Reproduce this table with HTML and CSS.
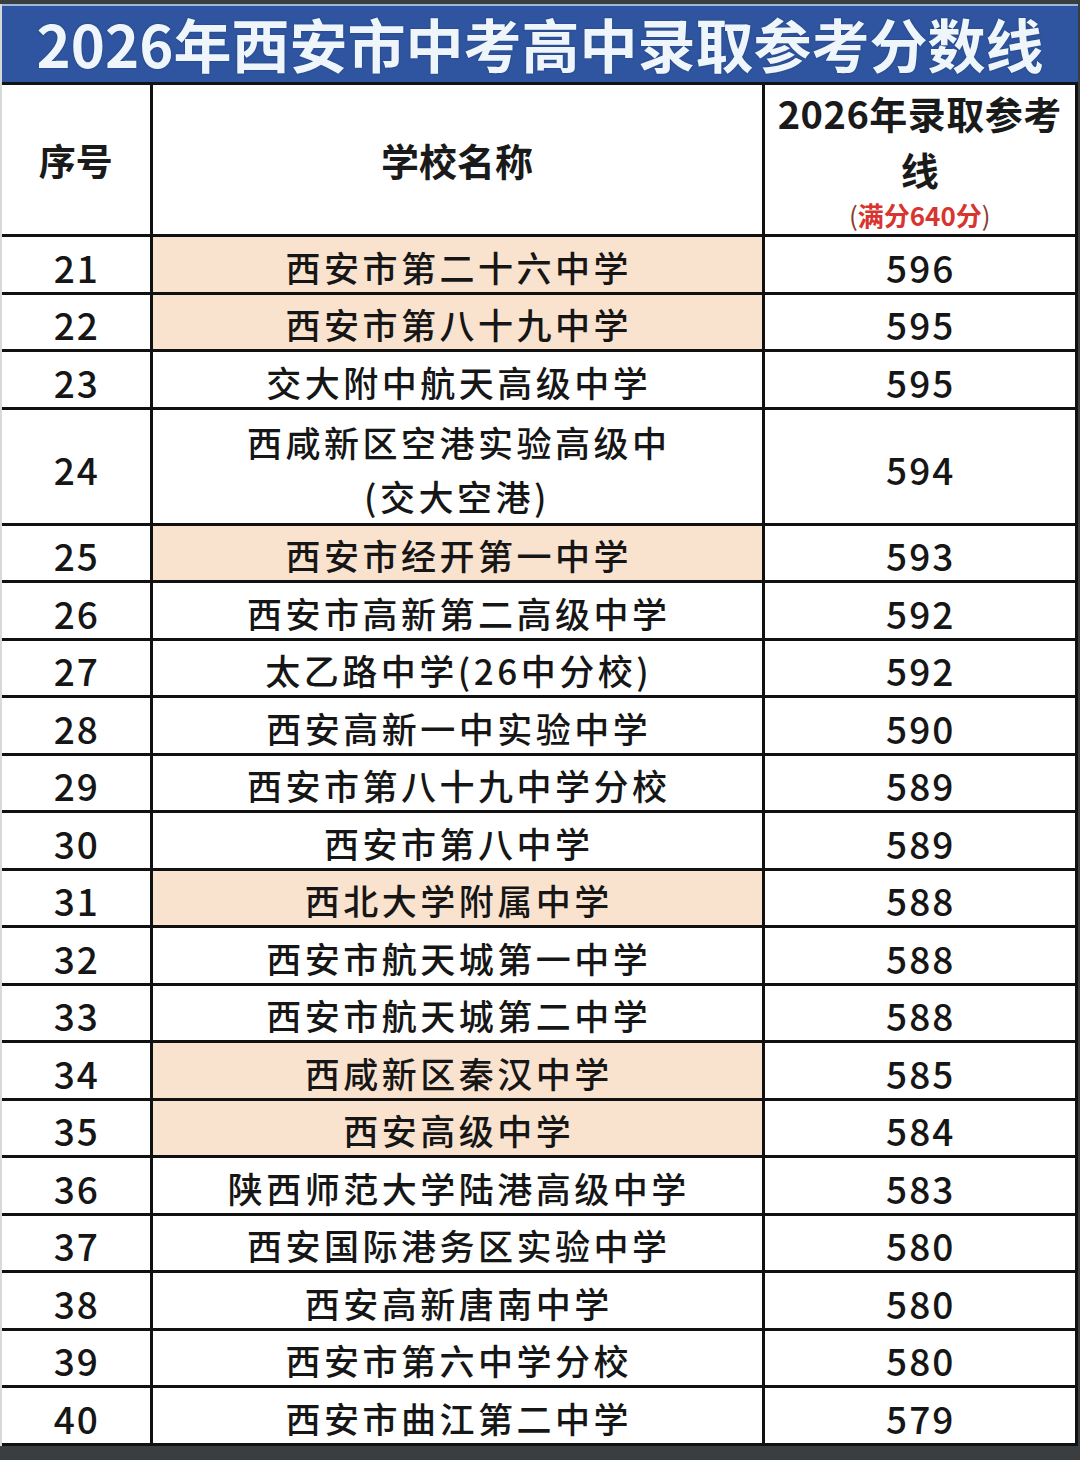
FILE: index.html
```html
<!DOCTYPE html>
<html lang="zh-CN">
<head>
<meta charset="utf-8">
<title>2026年西安市中考高中录取参考分数线</title>
<link rel="stylesheet" href="styles.css">
</head>
<body>
<div class="page">
  <div class="sheet">
    <div class="title-bar"><h1 class="title">2026年西安市中考高中录取参考分数线</h1></div>
    <table class="scores">
      <colgroup>
        <col class="c-no">
        <col class="c-name">
        <col class="c-score">
      </colgroup>
      <thead>
        <tr class="head">
          <th>序号</th>
          <th>学校名称</th>
          <th class="score-head">
            <span class="sh-line1">2026年录取参考</span>
            <span class="sh-line2">线</span>
            <span class="sh-note"><span class="paren">(</span>满分640分<span class="paren">)</span></span>
          </th>
        </tr>
      </thead>
      <tbody>
        <tr><td>21</td><td class="hl">西安市第二十六中学</td><td>596</td></tr>
        <tr><td>22</td><td class="hl">西安市第八十九中学</td><td>595</td></tr>
        <tr><td>23</td><td>交大附中航天高级中学</td><td>595</td></tr>
        <tr class="tall"><td>24</td><td>西咸新区空港实验高级中<br>(交大空港)</td><td>594</td></tr>
        <tr><td>25</td><td class="hl">西安市经开第一中学</td><td>593</td></tr>
        <tr><td>26</td><td>西安市高新第二高级中学</td><td>592</td></tr>
        <tr><td>27</td><td>太乙路中学(26中分校)</td><td>592</td></tr>
        <tr><td>28</td><td>西安高新一中实验中学</td><td>590</td></tr>
        <tr><td>29</td><td>西安市第八十九中学分校</td><td>589</td></tr>
        <tr><td>30</td><td>西安市第八中学</td><td>589</td></tr>
        <tr><td>31</td><td class="hl">西北大学附属中学</td><td>588</td></tr>
        <tr><td>32</td><td>西安市航天城第一中学</td><td>588</td></tr>
        <tr><td>33</td><td>西安市航天城第二中学</td><td>588</td></tr>
        <tr><td>34</td><td class="hl">西咸新区秦汉中学</td><td>585</td></tr>
        <tr><td>35</td><td class="hl">西安高级中学</td><td>584</td></tr>
        <tr><td>36</td><td>陕西师范大学陆港高级中学</td><td>583</td></tr>
        <tr><td>37</td><td>西安国际港务区实验中学</td><td>580</td></tr>
        <tr><td>38</td><td>西安高新唐南中学</td><td>580</td></tr>
        <tr><td>39</td><td>西安市第六中学分校</td><td>580</td></tr>
        <tr><td>40</td><td>西安市曲江第二中学</td><td>579</td></tr>
      </tbody>
    </table>
  </div>
</div>
</body>
</html>
```
FILE: styles.css
```css
html, body {
  margin: 0;
  padding: 0;
  background: #3b3e40;
}

.page {
  width: 1080px;
  height: 1460px;
  background: #3b3e40;
  padding-top: 4px;
  box-sizing: border-box;
  overflow: hidden;
}

.sheet {
  width: 1078px;
  background: #ffffff;
  border-left: 2px solid #d6d8da;
  box-sizing: border-box;
  font-family: "Noto Sans CJK SC", "Noto Sans", sans-serif;
  color: #161616;
}

.title-bar {
  height: 81px;
  box-sizing: border-box;
  background: #2f55a0;
  border-top: 2px solid #9fb6da;
  border-bottom: 3px solid #101418;
  display: flex;
  justify-content: center;
  align-items: center;
}

.title {
  margin: 0;
  padding-bottom: 2px;
  color: #eef6fb;
  font-size: 58px;
  font-weight: 700;
  line-height: 72px;
  white-space: nowrap;
  text-shadow: 0 0 2px rgba(20, 40, 80, 0.6);
}

.scores {
  width: 100%;
  border-collapse: collapse;
  table-layout: fixed;
}

.c-no { width: 149px; }
.c-name { width: 612px; }
.c-score { width: auto; }

.scores th,
.scores td {
  border: 3px solid #111;
  padding: 0;
  text-align: center;
  vertical-align: middle;
}

.scores tr > :first-child { border-left: none; }
.scores thead th { border-top: none; }

.head th {
  height: 149px;
  font-size: 37px;
  font-weight: 700;
  color: #1a1a1a;
}

.head th:nth-child(2) {
  font-size: 38px;
}

.score-head {
  line-height: 1;
}

.sh-line1,
.sh-line2,
.sh-note {
  display: block;
}

.sh-line1 {
  font-size: 38px;
  margin-top: 2px;
  letter-spacing: 0.5px;
}

.sh-line2 {
  font-size: 38px;
  margin-top: 18px;
}

.sh-note {
  font-size: 26px;
  color: #d83430;
  margin-top: 14px;
  letter-spacing: 0;
}

.paren {
  color: #8a3a32;
  font-weight: 400;
}

.scores tbody td {
  height: 49.5px;
  font-size: 35px;
  font-weight: 500;
  line-height: 46px;
  padding-top: 5px;
  box-sizing: content-box;
  letter-spacing: 3.5px;
  text-indent: 3.5px;
}

.scores tbody tr.tall td {
  height: 106px;
  line-height: 54px;
}

.scores tbody td:first-child,
.scores tbody td:last-child {
  font-size: 37px;
  letter-spacing: 2px;
  text-indent: 2px;
}

.scores td.hl {
  background: #f9e3cf;
}
```
